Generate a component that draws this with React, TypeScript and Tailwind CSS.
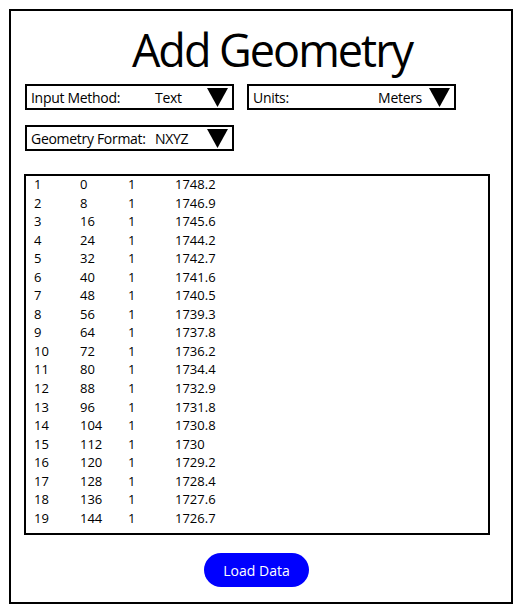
import React from "react";

const rows: [string, string, string, string][] = [
  ["1", "0", "1", "1748.2"],
  ["2", "8", "1", "1746.9"],
  ["3", "16", "1", "1745.6"],
  ["4", "24", "1", "1744.2"],
  ["5", "32", "1", "1742.7"],
  ["6", "40", "1", "1741.6"],
  ["7", "48", "1", "1740.5"],
  ["8", "56", "1", "1739.3"],
  ["9", "64", "1", "1737.8"],
  ["10", "72", "1", "1736.2"],
  ["11", "80", "1", "1734.4"],
  ["12", "88", "1", "1732.9"],
  ["13", "96", "1", "1731.8"],
  ["14", "104", "1", "1730.8"],
  ["15", "112", "1", "1730"],
  ["16", "120", "1", "1729.2"],
  ["17", "128", "1", "1728.4"],
  ["18", "136", "1", "1727.6"],
  ["19", "144", "1", "1726.7"],
];

function Tri() {
  return (
    <svg width="21" height="19" viewBox="0 0 21 19" className="shrink-0">
      <polygon points="0,0 21,0 10.5,19" fill="#000" />
    </svg>
  );
}

function Select({ label, value, labelW, right }: { label: string; value: string; labelW?: number; right?: boolean }) {
  return (
    <div className="flex h-[26px] w-[209px] items-center border-2 border-black pl-[4px] pr-[4px]">
      {right ? (
        <>
          <span className="flex-1">{label}</span>
          <span className="mr-[7px]">{value}</span>
        </>
      ) : (
        <>
          <span className="w-[124px] shrink-0">{label}</span>
          <span className="flex-1">{value}</span>
        </>
      )}
      <Tri />
    </div>
  );
}

export default function App() {
  return (
    <div
      className="h-[614px] w-[523px] bg-white pl-[9px] pt-[9px] text-black"
      style={{ fontFamily: '"Open Sans", "Noto Sans", sans-serif' }}
    >
      <div className="h-[595px] w-[504px] border-2 border-black">
        <div className="pl-[22px] pt-[16px] text-center text-[45px] leading-[45px] tracking-[-2px]">
          Add Geometry
        </div>
        <div className="mt-[12px] flex gap-[13px] pl-[14px] text-[14px] tracking-[-0.3px]">
          <Select label="Input Method:" value="Text" />
          <Select label="Units:" value="Meters" right />
        </div>
        <div className="mt-[15px] pl-[14px] text-[14px] tracking-[-0.3px]">
          <Select label="Geometry Format:" value="NXYZ" />
        </div>
        <div className="ml-[13px] mt-[23px] h-[361px] w-[466px] border-2 border-black pl-[8px]">
          <div className="-mt-[1px] text-[13px] leading-[18.55px]">
            {rows.map((r) => (
              <div key={r[0]} className="grid grid-cols-[46px_48px_47px_1fr]">
                <span>{r[0]}</span>
                <span>{r[1]}</span>
                <span>{r[2]}</span>
                <span>{r[3]}</span>
              </div>
            ))}
          </div>
        </div>
        <div className="mt-[18px] pl-[193px]">
          <button className="h-[34px] w-[105px] rounded-full bg-[#0000ff] text-[14px] text-white">
            Load Data
          </button>
        </div>
      </div>
    </div>
  );
}
